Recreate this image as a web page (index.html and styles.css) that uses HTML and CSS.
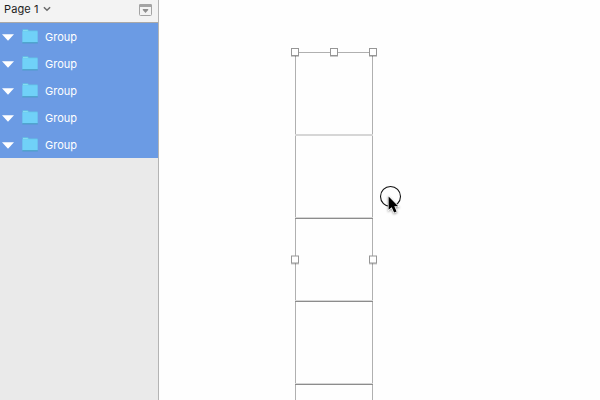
FILE: index.html
```html
<!DOCTYPE html>
<html lang="en">
<head>
<meta charset="utf-8">
<title>Layers</title>
<link rel="stylesheet" href="styles.css">
</head>
<body>
<svg width="0" height="0" class="defs" aria-hidden="true">
  <symbol id="arrow" viewBox="0 0 12 7"><path d="M0 .3H12L6 6.8Z" fill="#fff"/></symbol>
  <symbol id="folder" viewBox="0 0 16 15">
    <path d="M.5 .3H5.8L7 1.5H15.5V14H.5Z" fill="#62c3e6"/>
    <path d="M1 1H5.4L6.6 2.3H1Z" fill="#86dcf0"/>
    <path d="M.5 2.3H15.5V13.5H.5Z" fill="#70d1f8"/>
    <path d="M.3 13.2H15.8V14.4H.3Z" fill="#4a9cc6"/>
  </symbol>
</svg>
<div class="app">
  <aside class="sidebar">
    <header class="pages">
      <span class="page-name">Page 1</span>
      <svg class="chevron" width="8" height="6" viewBox="0 0 8 6"><path d="M.9 1.2 4 4.3 7.1 1.2" fill="none" stroke="#6b6b6b" stroke-width="1.5"/></svg>
      <svg class="toggle" width="13" height="12" viewBox="0 0 13 12"><rect x=".5" y=".5" width="12" height="11" rx="1" fill="#f3f3f3" stroke="#a3a3a3"/><path d="M1 0H12L13 1V3H0V1Z" fill="#a3a3a3"/><path d="M3.8 5H9.2V6L6.5 9 3.8 6Z" fill="#8f8f8f"/></svg>
    </header>
    <ul class="layers">
      <li class="layer"><svg class="arrow"><use href="#arrow"/></svg><svg class="folder"><use href="#folder"/></svg><span>Group</span></li>
      <li class="layer"><svg class="arrow"><use href="#arrow"/></svg><svg class="folder"><use href="#folder"/></svg><span>Group</span></li>
      <li class="layer"><svg class="arrow"><use href="#arrow"/></svg><svg class="folder"><use href="#folder"/></svg><span>Group</span></li>
      <li class="layer"><svg class="arrow"><use href="#arrow"/></svg><svg class="folder"><use href="#folder"/></svg><span>Group</span></li>
      <li class="layer"><svg class="arrow"><use href="#arrow"/></svg><svg class="folder"><use href="#folder"/></svg><span>Group</span></li>
    </ul>
  </aside>
  <main class="canvas">
    <svg width="441" height="400" viewBox="159 0 441 400">
      <g class="outline">
        <path d="M295.5 52V400M372.5 52V400M295 52.5H373"/>
      </g>
      <path class="line-soft" d="M295 135H373" stroke-width="2"/>
      <path class="line-soft" d="M295 217.5H373M295 300.5H373M295 383.5H373"/>
      <path class="line-dark" d="M295 218.5H373M295 301.5H373M295 384.5H373"/>
      <g class="handles">
        <rect x="291.5" y="48.5" width="7" height="7"/>
        <rect x="330.5" y="48.5" width="7" height="7"/>
        <rect x="369.5" y="48.5" width="7" height="7"/>
        <rect x="291.5" y="256" width="7" height="7"/>
        <rect x="369.5" y="256" width="7" height="7"/>
      </g>
      <circle cx="390.5" cy="196.5" r="10" fill="none" stroke="#111" stroke-width="1.1"/>
      <path class="pointer" d="M388.6 196.6V209.8L391.7 207.2L394.1 212.6L396.6 211.5L394.3 206.3H398.2Z"/>
    </svg>
  </main>
</div>
</body>
</html>
```
FILE: styles.css
```css
body {
  margin: 0;
  font-family: Inter, "Liberation Sans", sans-serif;
  font-size: 11px;
}

.defs {
  display: none;
}

.app {
  display: flex;
  height: 400px;
  overflow: hidden;
}

.sidebar {
  box-sizing: border-box;
  width: 159px;
  background: #eaeaea;
  border-right: 1px solid #b4b4b4;
}

.pages {
  box-sizing: border-box;
  display: flex;
  align-items: center;
  height: 23px;
  padding: 0 6px 4px 4px;
  background: #f3f3f3;
  border-bottom: 1px solid #aaa9a8;
  color: #1c1c1c;
}

.page-name {
  letter-spacing: .1px;
}

.chevron {
  margin-left: 4px;
}

.toggle {
  margin: 1px 0 0 auto;
}

.layers {
  margin: 0;
  padding: 0;
  list-style: none;
  background: #6b9be4;
}

.layer {
  box-sizing: border-box;
  display: flex;
  align-items: center;
  height: 27px;
  padding: 1px 0 0 2px;
  color: #fff;
}

.arrow {
  width: 12px;
  height: 7px;
}

.folder {
  width: 16px;
  height: 15px;
  margin: 0 7px 1px 8px;
}

.canvas {
  flex: 1;
  background: #fefefe;
}

.canvas svg {
  display: block;
}

.outline {
  fill: none;
  stroke: #b0b0b0;
}

.line-soft {
  stroke: #d6d6d6;
}

.line-dark {
  stroke: #8c8c8c;
}

.handles {
  fill: #fff;
  stroke: #969696;
  filter: drop-shadow(0 1px .5px rgba(0, 0, 0, .2));
}

.pointer {
  fill: #000;
  stroke: #fff;
  stroke-width: 1.4;
  paint-order: stroke;
  filter: drop-shadow(0 1px 1px rgba(0, 0, 0, .4));
}
```
